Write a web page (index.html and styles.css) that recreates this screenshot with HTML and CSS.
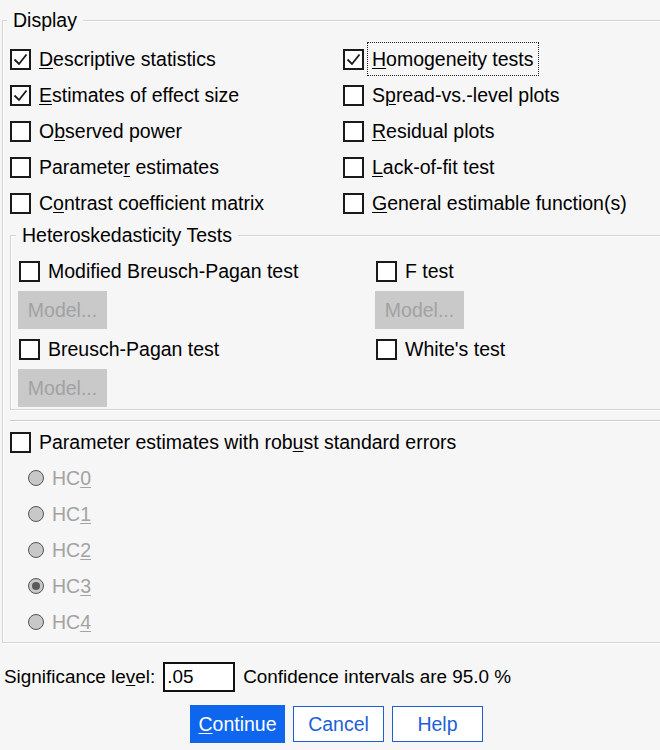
FILE: index.html
```html
<!DOCTYPE html>
<html>
<head>
<meta charset="utf-8">
<link rel="stylesheet" href="styles.css">
</head>
<body>
<div class="dialog">
  <fieldset class="group display">
    <legend>Display</legend>
    <div class="opts">
      <label class="chk"><span class="box"><svg viewBox="0 0 17 17" width="17" height="17"><path d="M2.5 8.5 L7 13 L14.5 3.5" fill="none" stroke="#1a1a1a" stroke-width="1.8"/></svg></span><span class="txt"><u>D</u>escriptive statistics</span></label>
      <label class="chk"><span class="box"><svg viewBox="0 0 17 17" width="17" height="17"><path d="M2.5 8.5 L7 13 L14.5 3.5" fill="none" stroke="#1a1a1a" stroke-width="1.8"/></svg></span><span class="txt focus"><u>H</u>omogeneity tests</span></label>
      <label class="chk"><span class="box"><svg viewBox="0 0 17 17" width="17" height="17"><path d="M2.5 8.5 L7 13 L14.5 3.5" fill="none" stroke="#1a1a1a" stroke-width="1.8"/></svg></span><span class="txt"><u>E</u>stimates of effect size</span></label>
      <label class="chk"><span class="box"></span><span class="txt">S<u>p</u>read-vs.-level plots</span></label>
      <label class="chk"><span class="box"></span><span class="txt">O<u>b</u>served power</span></label>
      <label class="chk"><span class="box"></span><span class="txt"><u>R</u>esidual plots</span></label>
      <label class="chk"><span class="box"></span><span class="txt">Paramete<u>r</u> estimates</span></label>
      <label class="chk"><span class="box"></span><span class="txt"><u>L</u>ack-of-fit test</span></label>
      <label class="chk"><span class="box"></span><span class="txt">C<u>o</u>ntrast coefficient matrix</span></label>
      <label class="chk"><span class="box"></span><span class="txt"><u>G</u>eneral estimable function(s)</span></label>
    </div>

    <fieldset class="group hetero">
      <legend>Heteroskedasticity Tests</legend>
      <div class="hgrid">
        <div class="hcol">
          <label class="chk hrow"><span class="box"></span><span class="txt">Modified Breusch-Pagan test</span></label>
          <button class="model" disabled>Model...</button>
          <label class="chk hrow"><span class="box"></span><span class="txt">Breusch-Pagan test</span></label>
          <button class="model" disabled>Model...</button>
        </div>
        <div class="hcol">
          <label class="chk hrow"><span class="box"></span><span class="txt">F test</span></label>
          <button class="model" disabled>Model...</button>
          <label class="chk hrow"><span class="box"></span><span class="txt">White's test</span></label>
        </div>
      </div>
    </fieldset>

    <div class="sep"></div>

    <div class="robust">
      <label class="chk rrow"><span class="box"></span><span class="txt">Parameter estimates with rob<u>u</u>st standard errors</span></label>
      <div class="radio"><span class="dot"></span><span>HC<u>0</u></span></div>
      <div class="radio"><span class="dot"></span><span>HC<u>1</u></span></div>
      <div class="radio"><span class="dot"></span><span>HC<u>2</u></span></div>
      <div class="radio"><span class="dot on"></span><span>HC<u>3</u></span></div>
      <div class="radio"><span class="dot"></span><span>HC<u>4</u></span></div>
    </div>
  </fieldset>

  <div class="sig">
    <span>Significance le<u>v</u>el:</span>
    <span class="input">.05</span>
    <span>Confidence intervals are 95.0 %</span>
  </div>

  <div class="buttons">
    <button class="btn primary"><u>C</u>ontinue</button>
    <button class="btn">Cancel</button>
    <button class="btn">Help</button>
  </div>
</div>
</body>
</html>
```

FILE: styles.css
```css
html, body {
  margin: 0;
  padding: 0;
}

body {
  width: 660px;
  height: 750px;
  overflow: hidden;
  background: #f6f6f6;
  font-family: "Liberation Sans", Arial, sans-serif;
  font-size: 19.5px;
  color: #000;
}

u {
  text-decoration-thickness: 1px;
  text-underline-offset: 2px;
}

.dialog {
  width: 660px;
  height: 750px;
  overflow: hidden;
  padding-top: 9px;
  box-sizing: border-box;
}

.group {
  margin: 0;
  min-width: 0;
  border: 1px solid #d4d4d4;
  box-shadow: inset 1px 1px 0 #fff, 1px 1px 0 #fff;
}

.group legend {
  margin-left: -3px;
  padding: 0 6px;
  line-height: 22px;
  background: #f6f6f6;
}

.display {
  width: 700px;
  margin-left: 2px;
  padding: 10px 0 2px 7px;
  box-sizing: border-box;
}

.opts {
  display: grid;
  grid-template-columns: 333px 1fr;
  grid-auto-rows: 36px;
}

.chk {
  display: flex;
  align-items: center;
  gap: 8px;
  line-height: 24px;
}

.box {
  flex: none;
  width: 21px;
  height: 21px;
  box-sizing: border-box;
  border: 2px solid #1a1a1a;
  background: #fff;
  display: flex;
  align-items: center;
  justify-content: center;
}

.box svg {
  display: block;
}

.txt.focus {
  outline: 1px dotted #222;
  outline-offset: 4px;
}

.hetero {
  margin-top: 3px;
  padding: 10px 0 2px 8px;
}

.hgrid {
  display: grid;
  grid-template-columns: 357px 1fr;
}

.hcol {
  display: flex;
  flex-direction: column;
  align-items: flex-start;
  gap: 5px;
}

.hrow {
  height: 30px;
}

.model {
  width: 89px;
  height: 38px;
  margin-left: -1px;
  border: none;
  background: #c9c9c9;
  color: #a2a2a2;
  font: inherit;
  padding: 0;
}

.sep {
  margin-top: 10px;
  height: 1px;
  background: #cccccc;
  border-bottom: 1px solid #fff;
}

.robust {
  margin-top: 2px;
}

.rrow {
  height: 36px;
}

.radio {
  display: flex;
  align-items: center;
  gap: 8px;
  height: 36px;
  margin-left: 18px;
  color: #a3a3a3;
}

.dot {
  flex: none;
  width: 16px;
  height: 16px;
  box-sizing: border-box;
  border-radius: 50%;
  border: 1.5px solid #555;
  background: #c8c8c8;
  display: flex;
  align-items: center;
  justify-content: center;
}

.dot.on::after {
  content: "";
  width: 8px;
  height: 8px;
  border-radius: 50%;
  background: #5a5a5a;
}

.sig {
  display: flex;
  align-items: center;
  gap: 8px;
  height: 31px;
  margin-top: 18px;
  padding-left: 4px;
  font-size: 18.9px;
}

.input {
  width: 72px;
  height: 30px;
  box-sizing: border-box;
  border: 2px solid #111;
  background: #fff;
  padding-left: 2px;
  line-height: 26px;
}

.buttons {
  display: flex;
  align-items: center;
  gap: 8px;
  margin-top: 13px;
  padding-left: 190px;
}

.btn {
  width: 91px;
  height: 36px;
  padding: 0;
  box-sizing: border-box;
  border: 1.5px solid #1f5fd6;
  background: #fff;
  color: #1f5fd6;
  font: inherit;
}

.btn.primary {
  width: 95px;
  height: 38px;
  border: none;
  background: #0f66ee;
  color: #fff;
}
```
